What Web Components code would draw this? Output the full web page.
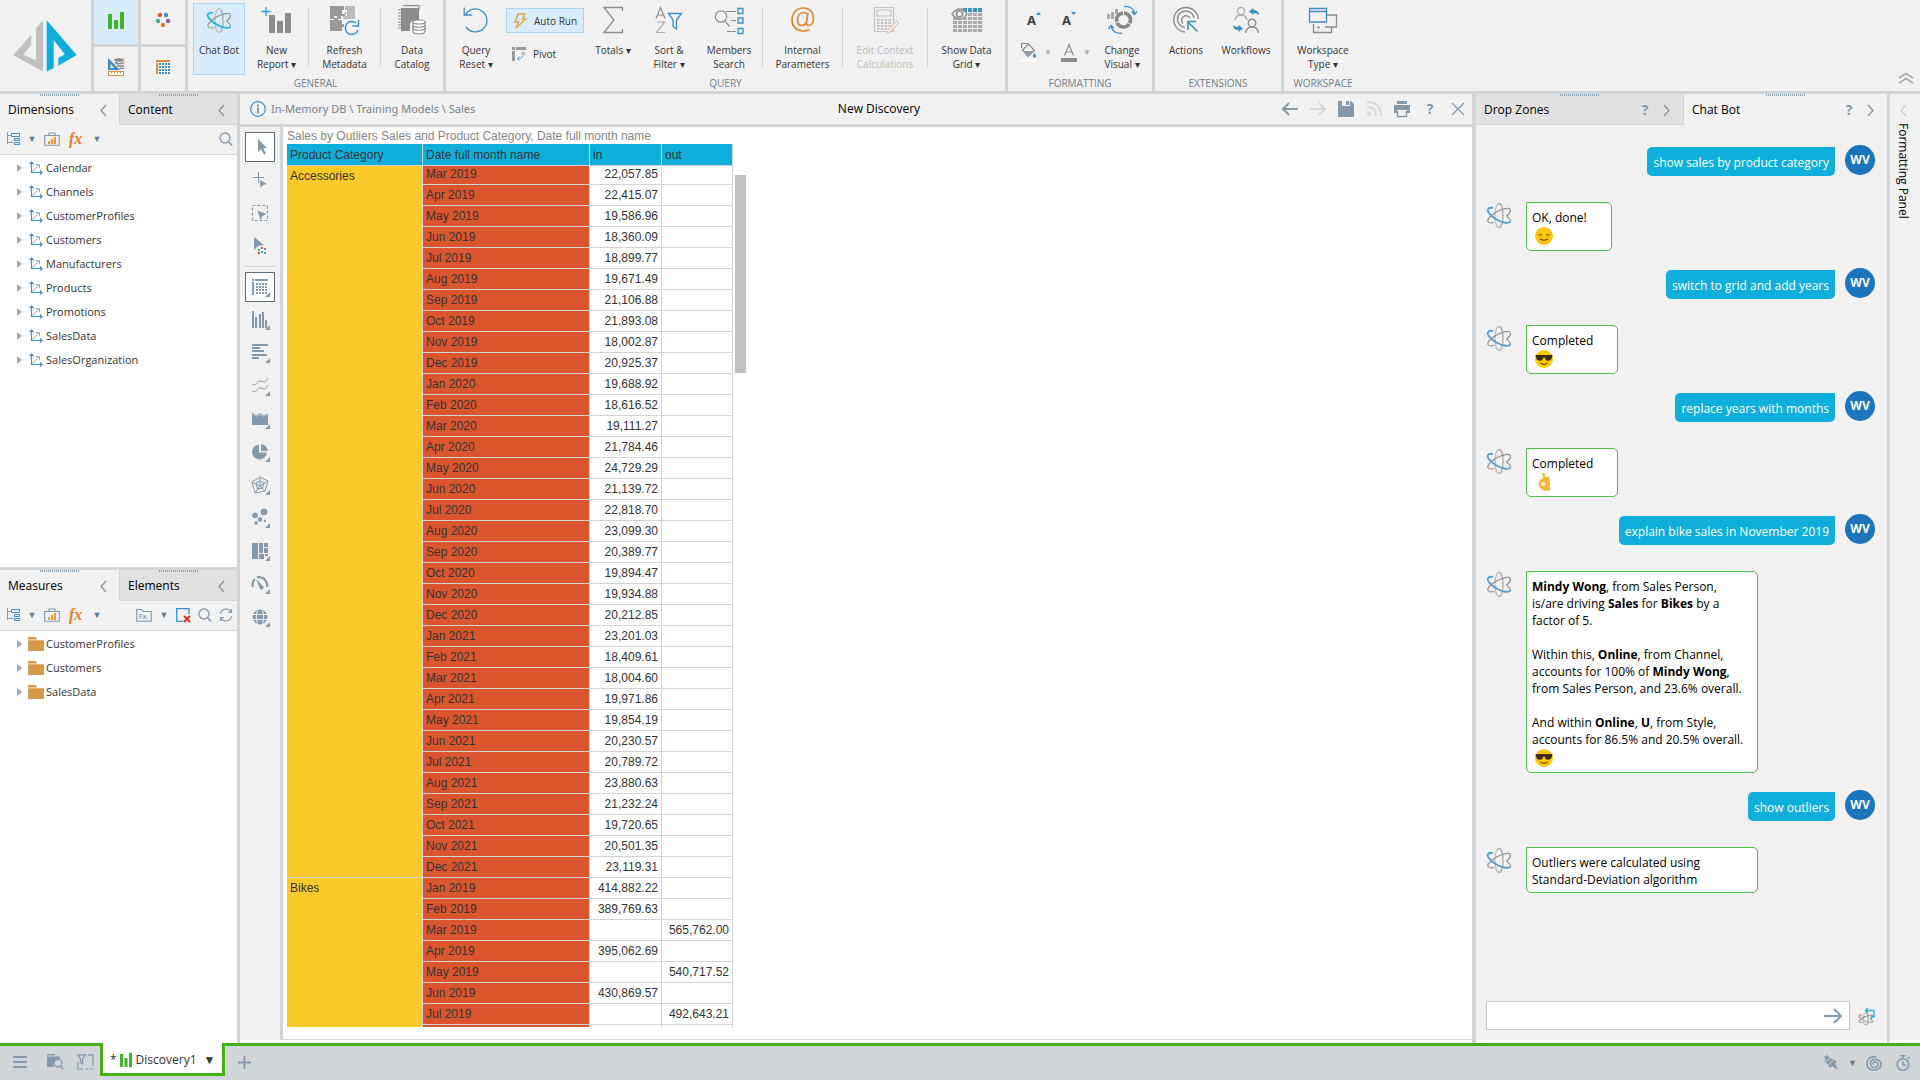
<!DOCTYPE html>
<html lang="en">
<head>
<meta charset="utf-8">
<title>New Discovery</title>
<style>
	:root {
		--panel: #f1f1f1;
		--line: #d1d5d8;
		--steel: #8499a9;
		--blue: #3d8ec4;
		--cyan: #10afdb;
		--green: #44b015;
		--hover: #d9ecfb;
		--hover-line: #a9d5f0;
	}
	html, body {
		height: 100%;
		margin: 0;
	}
	body {
		font-family: "Open Sans", "Noto Sans", sans-serif;
		font-size: 11px;
		line-height: 14px;
		color: #333;
		background: #fff;
	}
</style>
</head>
<body>
<dd-app>
	<dd-ribbon slot="ribbon"></dd-ribbon>
	<dd-panel slot="left" class="dimensions" first="Dimensions" second="Content">
		<dd-tree kind="axis" items="Calendar,Channels,CustomerProfiles,Customers,Manufacturers,Products,Promotions,SalesData,SalesOrganization"></dd-tree>
	</dd-panel>
	<dd-panel slot="left" class="measures" first="Measures" second="Elements" extra>
		<dd-tree kind="folder" items="CustomerProfiles,Customers,SalesData"></dd-tree>
	</dd-panel>
	<dd-report-header slot="header"></dd-report-header>
	<dd-toolbar slot="tools"></dd-toolbar>
	<dd-grid slot="canvas"></dd-grid>
	<dd-chat slot="chat">
		<dd-message from="user">show sales by product category</dd-message>
		<dd-message from="bot" short emoji="smile">OK, done!</dd-message>
		<dd-message from="user">switch to grid and add years</dd-message>
		<dd-message from="bot" short emoji="cool">Completed</dd-message>
		<dd-message from="user">replace years with months</dd-message>
		<dd-message from="bot" short emoji="hand">Completed</dd-message>
		<dd-message from="user">explain bike sales in November 2019</dd-message>
		<dd-message from="bot" emoji="cool"><b>Mindy Wong</b>, from Sales Person,<br>is/are driving <b>Sales</b> for <b>Bikes</b> by a<br>factor of 5.<br><br>Within this, <b>Online</b>, from Channel,<br>accounts for 100% of <b>Mindy Wong</b>,<br>from Sales Person, and 23.6% overall.<br><br>And within <b>Online</b>, <b>U</b>, from Style,<br>accounts for 86.5% and 20.5% overall.</dd-message>
		<dd-message from="user">show outliers</dd-message>
		<dd-message from="bot">Outliers were calculated using<br>Standard-Deviation algorithm</dd-message>
	</dd-chat>
	<dd-side-tab slot="side">Formatting Panel</dd-side-tab>
	<dd-status-bar slot="status"></dd-status-bar>
</dd-app>

<script>
// ICONS. name : [width, height, content]
const G = '#8c8c8c'
const S = '#8499a9'
const B = '#3d8ec4'
const corner = `<path d="M21 16v5h-5z" fill="${S}"/>`
const stroke = (color, d, w=1.2) => `<path d="${d}" fill="none" stroke="${color}" stroke-width="${w}"/>`
const fill = (color, d) => `<path d="${d}" fill="${color}"/>`
const dots = (color, x0, y0, nx, ny, w, h, sx, sy) => {
	let d = ''
	for (let j = 0; j < ny; j++) {
		for (let i = 0; i < nx; i++) {
			d += `M${x0+i*sx} ${y0+j*sy}h${w}v${h}h${-w}z`
		}
	}
	return fill(color, d)
}
const atom = (blue, w) => `
	<g fill="none" stroke-width="${w}">
		<path d="M13 1.500C15.500 1.500 17 7 17 13.500S15.500 25.500 13 25.500" stroke="#a9a9a9"/>
		<path d="M13 25.500C10.500 25.500 9 20 9 13.500S10.500 1.500 13 1.500" stroke="#bdbdbd"/>
		<path d="M2 19.500C.8 17.500 5 13 11 9.800S23 5.500 24.200 7.500 23 12 20.500 14" stroke="#909090"/>
		<path d="M2 19.500C3.200 21.500 6 21 8 20.400M20.500 14C23 16 25.500 18.500 24.200 20" stroke="#a0a0a0"/>
		<path d="M7 6C4 5.300 2.600 6 1.800 7.500.8 9.500 5 14.500 11 17.800S23 21.800 24.400 19.500" stroke="${blue}" stroke-width="${w*1.4}"/>
	</g>`

const ICONS = {
	logo: [64, 52, fill('#bfbfbf', 'M30 0.300V51.600L.3 35 18.300 14.700V25L10 34.700 23 40.300V8.300z') + fill('#10afdb', 'M33.700.3 63.700 35 45.300 45.700V38L51.700 34.300 40.700 20.300V48L33.700 51.600z')],
	bars_green: [18, 18, fill('#3fb329', 'M1 3h4v15h-4zM7 9h4v9h-4zM13 1h4v17h-4z')],
	five_dots: [16, 16, '<circle cx="5" cy="3" r="2.200" fill="#d9573a"/><circle cx="11" cy="3" r="2.200" fill="#3d8ec4"/><circle cx="3" cy="9" r="2.200" fill="#4aa99b"/><circle cx="13" cy="9" r="2.200" fill="#8d5bb0"/><circle cx="8" cy="13" r="2.200" fill="#dd7f3c"/>'],
	ruler: [18, 18, fill(B, 'M1 0 13 12H1zM3.500 6v4h4z') + '<ellipse cx="12" cy="2" rx="5" ry="1.800" fill="#8c8c8c"/>' + stroke(G, 'M8 4.500q4 2.500 9 0M10 7.500q4 1.500 7 0M12.500 10.300q3 .5 4.500-.5', 1.600) + fill('#fff', 'M1.500 13.500h15v4h-15z') + stroke('#cf9440', 'M1.500 13.500h15v4h-15zM4.500 13.500v2M7.500 13.500v2M10.500 13.500v2M13.500 13.500v2', 1.200)],
	mode_grid: [16, 16, fill('#d08f3c', 'M1 1h14v2H1zM1 4h2v11H1z') + dots(B, 4, 4, 4, 4, 2, 2, 3, 3)],
	atom: [26, 27, atom('#1eaee6', 1.200)],
	atom_chat: [26, 27, atom('#5a9cc8', 1.300)],
	new_report: [32, 28, fill(G, 'M8 9h6v18H8zM16 15h6v12h-6zM24 7h6v20h-6z') + stroke('#22a9d8', 'M5 1v9M.5 5.500h9', 1.300)],
	refresh_meta: [32, 30, fill('#999', 'M1 1h14v4h-2v4h4V7h-1v4h-4v3H8v-3H5v3H1z') + fill('#bbb', 'M16 1h10v13H14v-3h4V5h-2z') + fill('#999', 'M1 15h4v-2h4v2h4v4h2v3h-2v4H1z') + stroke(B, 'M27 18A6.500 6.500 0 1 0 29 25M29.500 15v6h-6', 1.400)],
	catalog: [30, 30, fill(G, 'M4 3h18v12h-3q-6 1-6 4v7H4z') + stroke(G, 'M22 5V.7H6M1 5h4M1 8h4M1 11h4M1 14h4M1 17h4M1 20h4M1 23h4') + `<g fill="#fff" stroke="${G}" stroke-width="1.200"><path d="M16 17v9c0 4 12 4 12 0v-9"/><ellipse cx="22" cy="17" rx="6" ry="2"/><path d="M16 20c0 3 12 3 12 0M16 23c0 3 12 3 12 0" fill="none"/></g>`],
	query_reset: [28, 28, stroke(B, 'M3.500 8.500A11.500 11.500 0 1 1 4 21M2.200 1.500v7.500h8', 1.300)],
	bolt: [14, 16, stroke('#e8a33a', 'M5 1h7L9.500 6H13L3 15 5.500 9H2z', 1.300)],
	pivot: [14, 14, fill('#999', 'M0 0h3v3H0zM4 0h10v3H4zM0 4h3v10H0z') + stroke('#79aacd', 'M5.500 11.500Q12 11.500 11.500 5.500M9.500 7.500 11.500 5l2 2.500M7.500 9.500 5.200 11.500l2.300 2', 1)],
	sigma: [22, 28, stroke(G, 'M20.500 5V1.500H2L12 14 2 26.500H20.500V23', 1.300)],
	sort: [30, 28, stroke(G, 'M2 12.500 6.500 1.500 11 12.500M3.500 9h6', 1.200) + stroke('#aaa', 'M3 16h7.500L2.500 26.500H11', 1.200) + stroke(B, 'M14.500 7.500h13l-5 6.500v9l-3.500-2.500V14z', 1.300)],
	members: [30, 28, `<circle cx="7" cy="10.500" r="5.700" fill="none" stroke="${G}" stroke-width="1.200"/>` + stroke(G, 'M11 15l4.500 5.500M12 5.500h10M17 14.500h5M13 25.500h9', 1.200) + stroke(B, 'M24 2.500h5v5h-5zM24 12h5v5h-5zM24 22.500h5v5h-5z', 1.300)],
	at: [26, 28, stroke('#de8a35', 'M17.500 8.500C17 7 15.500 6.500 13.500 6.500 9.500 6.500 7.500 10 7.500 14s2 5.500 4.500 5.500c3 0 4.500-3 5-5.500l.8-7-1.300 9.500c-.2 2 .5 3 2 3 3 0 5-3 5-7C23.500 6 19.500 2 13.500 2 6.500 2 2 7 2 14c0 6.500 4.500 11 11 11 2.500 0 4.500-.5 6.500-1.500', 1.700)],
	calc: [28, 28, `<g opacity=".45">` + stroke(G, 'M3.500 1.500h19v24h-19zM6 4h14v6H6z', 1.200) + dots(G, 6, 13, 4, 4, 2.500, 2, 3.800, 3) + fill('#fff', 'M26 14l2 2-9 10-4 2 1-4z') + stroke('#e08c50', 'M25.500 15l2 2-8.500 9-3 1 1-3z', 1.200) + '</g>'],
	data_grid: [32, 28, dots('#aaa', 2, 7, 6, 5, 4, 3, 5, 4) + dots(B, 12, 2, 4, 1, 4, 4, 5, 4) + `<path d="M1 8q8-10 15 0-7 10-15 0z" fill="#f1f1f1" stroke="${G}" stroke-width="1.300"/><circle cx="8.500" cy="8" r="3" fill="none" stroke="${G}" stroke-width="1.500"/>`],
	font_up: [16, 22, '<text x="1" y="17" font-family="Noto Sans" font-weight="700" font-size="13" fill="#444">A</text>' + fill(B, 'M10 7h5l-2.500-3z')],
	font_down: [16, 22, '<text x="1" y="17" font-family="Noto Sans" font-weight="700" font-size="13" fill="#444">A</text>' + fill(B, 'M10 4h5l-2.500 3z')],
	bucket: [18, 20, stroke(G, 'M2.500 8 8.500 2 14.500 8.500 8 14.500zM1.500 6V1.500h7', 1.200) + fill('#999', 'M3 9h11L8 14.500z') + fill(B, 'M14.500 11q3 4 0 5-3-1 0-5z') + fill('#fff', 'M0 17h16v3H0z')],
	font_color: [16, 20, stroke(G, 'M3.500 13.500 8 2.500 12.500 13.500M5 10h6', 1.200) + fill('#8c8c8c', 'M0 16h16v4H0z')],
	change: [32, 30, fill('#aaa', 'M1 9h3v5H1zM5 7h3v7H5zM9 4h3v5H9z') + '<circle cx="17.500" cy="15" r="7" fill="none" stroke="#888" stroke-width="3.600"/>' + stroke('#f1f1f1', 'M17.500 6v4M9 18l4-1.500M22 18l4 2', 1) + stroke(B, 'M18 1.500q10-.5 10.500 8M25.500 6.500 28.500 9.500 31 6.500M16 28.500Q5.500 28.500 5 20M2.500 24 5 20.500 8 23', 1.300)],
	actions: [28, 28, `<g fill="none" stroke="${G}" stroke-width="1.400"><path d="M13 26A12.300 12.300 0 1 1 26.300 13"/><path d="M13 21.500A8.300 8.300 0 1 1 22 12"/><path d="M11 17.500A4.500 4.500 0 1 1 18 12"/></g>` + stroke(B, 'M25.500 25.500 16 16M16 24v-8.500h8', 1.600)],
	workflows: [28, 28, `<g fill="none" stroke="#aaa" stroke-width="1.300"><circle cx="9" cy="5" r="3.600"/><path d="M3 14q1-5 6-5t6 5"/></g><g fill="none" stroke="${G}" stroke-width="1.400"><circle cx="20" cy="17" r="3.800"/><path d="M13.500 27q1-6 6.500-6t6.500 6"/></g>` + fill(B, 'M17 5.500 21.500 2v2Q27 4 27 9.500 25.500 7 21.500 7v2zM11 22.500 6.500 26v-2Q1 24 1 19q1.500 2 5.500 2v-2z')],
	workspace: [30, 28, stroke(G, 'M19 9h9.500v12H17M12 21.500H9M5.500 18v8.500h18v-5', 1.300) + stroke(B, 'M1.500 2.500h17v13.500h-17zM1.500 5.500h17', 1.300)],
	back: [16, 14, stroke(S, 'M1 7h15M7 1 1 7l6 6', 2)],
	forward: [16, 14, stroke('#d3d8dc', 'M0 7h15M9 1l6 6-6 6', 2)],
	save: [18, 18, fill(S, 'M1 1h4v5h8V1h1l3 3v13H1zM9 1h3v4H9z')],
	rss: [18, 18, `<circle cx="4" cy="14" r="2" fill="#d3d8dc"/>` + stroke('#d3d8dc', 'M2 7q9 0 9 9M2 2q14 0 14 14', 2)],
	print: [18, 18, fill(S, 'M4 1h10v3H4zM1 5h16v8h-3v-3H4v3H1z') + stroke(S, 'M4.500 11v5.500h9V11', 1.300)],
	close: [14, 14, stroke(S, 'M1 1l12 12M13 1 1 13', 1.300)],
	chev_left: [8, 14, stroke(G, 'M7 2 2 7.500 7 13', 1.200)],
	chev_right: [8, 14, stroke(G, 'M1 2l5 5.500L1 13', 1.200)],
	chev_light: [8, 14, stroke('#c4c9cd', 'M7 2 2 7.500 7 13', 1.200)],
	collapse: [16, 12, stroke('#a3abb2', 'M1 6l7-4.500L15 6M1 11l7-4.500 7 4.500', 1.500)],
	tree: [14, 14, stroke(S, 'M1.500 0v12M2 3.500h3M2 10.500h5', 1) + stroke(B, 'M5.500 1.500h8v3h-8zM8.500 6.500h5v2h-5zM8.500 10.500h5v2h-5z', 1)],
	case: [16, 14, stroke(S, 'M.7 3.500h14.600v9.800H.7zM5 3.500V1h6v2.500', 1.100) + fill('#f09a2e', 'M4 9h2v3H4zM7 7h2v5H7zM10 5h2v7h-2z')],
	fx: [18, 20, '<text x="2" y="15" font-family="Liberation Serif" font-style="italic" font-weight="700" font-size="16" fill="#f07a28">fx</text>'],
	search: [14, 14, `<circle cx="6" cy="6" r="5" fill="none" stroke="${S}" stroke-width="1.300"/>` + stroke(S, 'M10 10l3 3.500', 1.600)],
	fx_folder: [16, 14, stroke(S, 'M.7 1.500h5l1 2h8.600v9.800H.7z', 1.100) + `<text x="3" y="11" font-family="Open Sans" font-weight="600" font-size="7" fill="${S}">Fx</text>`],
	clear: [15, 14, stroke(B, 'M13 6V.7H.7v12.600H7', 1.300) + stroke('#e32222', 'M8 8l6 6M14 8l-6 6', 1.900)],
	sync: [14, 14, stroke(S, 'M1.500 6A5.600 5.600 0 0 1 12 4M12.500 8A5.600 5.600 0 0 1 2 10M12.500 1v3.500H9M1.500 13V9.500H5', 1.200)],
	axis: [14, 14, stroke(B, 'M2.500 1v10.500h11M.5 3 2.500 1l2 2M11 9.500l2 2-2 2', 1.200) + stroke('#9aa7b0', 'M3.500 10.500 10.500 3.500M6.500 3.500h4v4', 1)],
	folder: [16, 14, fill('#d6994a', 'M0 0h7l2 1.500v1H0zM0 3.300h16V14H0z')],
	info: [16, 16, `<circle cx="8" cy="8" r="7.300" fill="none" stroke="${B}" stroke-width="1.200"/>` + fill(S, 'M7 3.500h2v2H7zM7 6.500h2v6H7z')],
	cursor: [22, 22, fill(S, 'M9 3l9 9h-4l3 5.500-2 1-3-5.500-3 3z')],
	add_cursor: [22, 22, stroke(S, 'M9.500 3v11M4 8.500h11', 1) + fill(S, 'M11 11l7 4-4 1-2.500 3z')],
	lasso: [22, 22, `<path d="M3.500 3.500h15v15h-15z" fill="none" stroke="${S}" stroke-width="1.200" stroke-dasharray="3 2"/>` + fill(S, 'M8.500 8.500l9 3.500-4 2-2 4z')],
	cursor_dots: [22, 22, fill(S, 'M5 2l10 8-6 1-4 4z') + '<path d="M9 14h2v2H9zM12 16h2v2h-2z" fill="#4aa99b"/><path d="M12 12h2v2h-2zM9 17h2v2H9z" fill="#d9573a"/><path d="M15 13h2v2h-2zM15 17h2v2h-2z" fill="#5a9cc8"/>'],
	t_grid: [22, 22, fill(S, 'M6 3h13v2H6zM3 6h2v13H3zM3 3h2v2H3z') + dots(S, 7, 7, 4, 4, 2, 2, 3, 3) + corner],
	t_bars: [22, 22, fill(S, 'M3 2h2v17H3zM6 8h2v11H6zM10 5h2v14h-2zM13 3h2v16h-2zM16 11h2v8h-2z') + corner],
	t_rows: [22, 22, fill(S, 'M3 2h16v2H3zM3 5h8v2H3zM3 8h12v2H3zM3 12h15v2H3zM3 15h7v2H3z') + corner],
	t_lines: [22, 22, stroke(S, 'M3 9c5 3 5-4 9-3s3 3 7-3M3 16c5 3 5-4 9-3s3 3 7-3', 1) + corner],
	t_area: [22, 22, fill('#a9b8c4', 'M3 4l4 3 4-2 4 2 4-2v7H3z') + fill(S, 'M3 6l4 3 4-2 4 2 4-2v10H3z') + corner],
	t_pie: [22, 22, fill(S, 'M10 3.500a7.500 7.500 0 1 0 8 8h-8z') + fill(S, 'M12 3v7h7a7.500 7.500 0 0 0-7-7z') + corner],
	t_radar: [22, 22, stroke(S, 'M11 3 19 7 16 17 6 19 3 8zM11 7l4 2-1.500 5-5 1L7 9zM11 3v9M19 7l-8 5M16 17l-5-5M6 19l5-7M3 8l8 4', 1) + corner],
	t_scatter: [22, 22, `<g fill="${S}"><circle cx="15" cy="5" r="3.300"/><circle cx="6" cy="8.500" r="2.800"/><circle cx="11" cy="12.500" r="2.200"/><circle cx="7" cy="16" r="1.800"/><circle cx="16" cy="14" r="1.200"/></g>` + corner],
	t_tree: [22, 22, fill(S, 'M3 3h6v16H3zM10 3h4v10h-4zM15 3h4v4h-4zM15 8h4v5h-4zM10 14h5v5h-5zM16 14h3v2h-3z') + corner],
	t_gauge: [22, 22, stroke(S, 'M4 14A7.500 7.500 0 0 1 6 6M8 4.500A8 8 0 0 1 18 14', 2.200) + fill(S, 'M7 6l7 7a2 2 0 0 1-3 3z') + corner],
	t_globe: [22, 22, `<circle cx="11" cy="11" r="7.500" fill="${S}"/>` + stroke('#f1f1f1', 'M3 8.500h16M3 13.500h16M8.500 3q-2.500 8 0 16M13.500 3q2.500 8 0 16', 1) + corner],
	menu: [14, 12, stroke(S, 'M0 1h14M0 6h14M0 11h14', 2)],
	find_page: [17, 16, fill(S, 'M0 0h8v1.500H0zM0 2.500h13V6Q6 5 6.500 13H0z') + `<circle cx="11" cy="9" r="3.800" fill="none" stroke="${S}" stroke-width="1.300"/>` + stroke(S, 'M13.500 11.500l2.500 4', 1.400)],
	filter_page: [17, 16, stroke(S, 'M.8.8h7.500L5.500 5v5L3.500 8.500V5zM11 .8h5v11M.8 8v7H6M8.500 15h3M13 15h3', 1.200)],
	bars_tab: [12, 14, fill('#3fb329', 'M0 1h3v13H0zM4.500 5h3v9h-3zM9 0h3v14H9z')],
	plus: [13, 13, stroke(S, 'M6.500 0v13M0 6.500h13', 2)],
	pin: [16, 16, fill(S, 'M4 0l3 3 5 2 2 2-2 1 3 7-6-4-2 2-2-3-4-4 2-1-2-3z') + stroke('#d1d6d9', 'M2 8l6-6M5 10l6-5', 1)],
	spiral: [16, 16, stroke(S, 'M10 2Q1 1 1 8.500 1 15 8 15t7-6.500Q14 4.500 9 4.500T4.500 9q.5 3.500 4 3.500T12 9Q11.500 7 9 7T7.500 9.500', 1.600)],
	timer: [16, 16, `<circle cx="8" cy="9.500" r="5.800" fill="none" stroke="${S}" stroke-width="1.600"/>` + stroke(S, 'M8 6v4h3M5.500.8h5M8 1v2M13 2l1.500 1.500', 1.400)],
	send: [18, 16, stroke(S, 'M0 8h16M10 1l7 7-7 7', 2)],
	undo_bot: [18, 18, `<g transform="translate(1 5) scale(.6 .5)">${atom('#b5b5b5', 2.200)}</g>` + stroke('#2eaedb', 'M11 1 8.500 3.500 11 6M9 3.500h8V10h-3.500', 1.400)],
	smile: [18, 18, '<circle cx="9" cy="9" r="9" fill="#fcc80d"/>' + stroke('#6b4a0c', 'M3.500 7.500q1.500 1 3 0M11.500 7.500q1.500 1 3 0M5 12q4 2.500 8 0', 1.200)],
	cool: [18, 18, '<circle cx="9" cy="9" r="9" fill="#fcc80d"/>' + fill('#3b2f1e', 'M.5 5h17l-1 4q-2 2.500-5 1.500Q10 9.500 9.500 7.500h-1Q8 9.500 6.500 10.500 3 11.500 1.500 9z') + stroke('#6b4a0c', 'M5.500 13.300q3.500 2 7 0', 1.200)],
	hand: [18, 18, fill('#f6b83c', 'M7 .5q2-1 3 .5v3h4l1 5v8q-1 1-3 1-5 0-7-3-2-3-1-6 1-3 4-4z') + '<circle cx="8" cy="11" r="2" fill="#fff3d6"/>']
}

class DDElement extends HTMLElement {
	constructor() {
		super()
		this.attachShadow({ mode: 'open' })
	}
	connectedCallback() {
		this.shadowRoot.innerHTML = this.render()
	}
	render() {
		return '<slot></slot>'
	}
}

class DDIcon extends DDElement {
	render() {
		const [w, h, content] = ICONS[this.getAttribute('name')]
		return `
		<style>
			:host { display: inline-flex; flex: none; }
			svg { display: block; overflow: visible; }
		</style>
		<svg width="${w}" height="${h}" viewBox="0 0 ${w} ${h}" aria-hidden="true">${content}</svg>`
	}
}
customElements.define('dd-icon', DDIcon)

const icon = (name) => `<dd-icon name="${name}"></dd-icon>`

// shared rules, repeated in each shadow root that holds buttons
const BUTTON_CSS = `
	button {
		display: flex;
		align-items: center;
		justify-content: center;
		box-sizing: border-box;
		margin: 0;
		padding: 0;
		border: 0;
		background: none;
		font: inherit;
		color: inherit;
		cursor: pointer;
	}
`

class DDApp extends DDElement {
	render() {
		return `
		<style>
			:host {
				display: grid;
				grid-template-columns: 237px minmax(0, 1fr) 411px 30px;
				grid-template-rows: auto minmax(0, 1fr) auto;
				column-gap: 3px;
				height: 100vh;
				background: var(--line);
			}
			.ribbon, .status {
				grid-column: 1 / -1;
			}
			.left {
				display: grid;
				grid-template-rows: minmax(0, 473fr) minmax(0, 470fr);
				gap: 3px;
			}
			.center {
				display: grid;
				grid-template-columns: 40px minmax(0, 1fr);
				grid-template-rows: 30px minmax(0, 1fr);
				gap: 3px;
				margin-right: 1px;
			}
			.header {
				grid-column: 1 / -1;
			}
			.body {
				border-bottom: 3px solid #fff;
				min-height: 0;
			}
			.body > div, .chat, .side {
				background: var(--panel);
			}
			.center > .canvas {
				background: #fff;
			}
			.chat {
				display: grid;
			}
		</style>
		<header class="ribbon"><slot name="ribbon"></slot></header>
		<aside class="left body"><slot name="left"></slot></aside>
		<main class="center body">
			<div class="header"><slot name="header"></slot></div>
			<div><slot name="tools"></slot></div>
			<div class="canvas"><slot name="canvas"></slot></div>
		</main>
		<aside class="chat body"><slot name="chat"></slot></aside>
		<aside class="side body"><slot name="side"></slot></aside>
		<footer class="status"><slot name="status"></slot></footer>
		`
	}
}

// RIBBON
class DDRibbonButton extends DDElement {
	render() {
		return `
		<style>
			:host { display: flex; flex: none; color: #333; }
			${BUTTON_CSS}
			button {
				flex: 1;
				flex-direction: column;
				justify-content: flex-start;
				height: 72px;
				border: 1px solid transparent;
				text-align: center;
			}
			:host([active]) button {
				background: var(--hover);
				border-color: var(--hover-line);
			}
			:host([off]) button { color: #bbb; }
			.pic {
				display: flex;
				align-items: center;
				height: 32px;
				margin-bottom: 7px;
			}
		</style>
		<button ${this.hasAttribute('off') ? 'disabled' : ''}><span class="pic">${icon(this.getAttribute('icon'))}</span><span><slot></slot></span></button>
		`
	}
}
customElements.define('dd-ribbon-button', DDRibbonButton)

class DDRibbon extends DDElement {
	render() {
		return `
		<style>
			:host {
				display: flex;
				height: 91px;
				background: var(--panel);
				border-bottom: 3px solid var(--line);
				font-size: 10px;
			}
			${BUTTON_CSS}
			.logo {
				display: flex;
				align-items: center;
				width: 78px;
				padding-left: 13px;
				border-right: 3px solid var(--line);
			}
			.modes {
				display: grid;
				grid-template-columns: 44px 44px;
				grid-template-rows: 44px 44px;
				gap: 3px;
				background: var(--line);
				padding-right: 3px;
			}
			.modes button { background: var(--panel); }
			.modes button.on { background: var(--hover); }
			.modes button:nth-child(-n+2) { padding-bottom: 4px; }
			.modes button:nth-child(n+3) { padding-bottom: 4px; }
			section {
				display: flex;
				flex-direction: column;
				justify-content: space-between;
				border-right: 3px solid var(--line);
			}
			section:last-of-type { border: 0; }
			h2 {
				margin: 0;
				padding-bottom: 1px;
				font-size: 10px;
				font-weight: 400;
				text-align: center;
				color: #6e7d88;
			}
			.items {
				display: flex;
				align-items: flex-start;
				padding-top: 3px;
			}
			.general { width: 250px; padding-left: 5px; }
			.extensions { padding-right: 6px; }
			.items i {
				width: 1px;
				height: 59px;
				margin-top: 5px;
				background: var(--line);
			}
			.stack {
				display: flex;
				flex-direction: column;
				gap: 8px;
				width: 78px;
				padding-top: 5px;
			}
			.stack button {
				justify-content: flex-start;
				height: 25px;
				gap: 7px;
				padding-left: 6px;
				border: 1px solid transparent;
			}
			.stack button + button { padding-left: 5px; }
			.stack button.on {
				background: var(--hover);
				border-color: var(--hover-line);
			}
			.fonts {
				display: grid;
				grid-template-columns: 41px 31px;
				grid-template-rows: 32px 34px;
				padding-left: 12px;
			}
			.fonts button { justify-content: flex-start; gap: 6px; }
			.fonts button:first-child { padding-left: 6px; }
			.fonts small { font-size: 8px; color: #aaa; }
			.collapse {
				margin-left: auto;
				align-self: flex-end;
				padding: 0 6px 7px 0;
			}
		</style>
		<div class="logo">${icon('logo')}</div>
		<div class="modes">
			<button class="on" aria-label="Discover">${icon('bars_green')}</button>
			<button aria-label="Present">${icon('five_dots')}</button>
			<button aria-label="Model">${icon('ruler')}</button>
			<button aria-label="Tabulate">${icon('mode_grid')}</button>
		</div>
		<section>
			<div class="items general">
				<dd-ribbon-button style="width:52px" icon="atom" active>Chat Bot</dd-ribbon-button>
				<dd-ribbon-button style="width:63px" icon="new_report">New<br>Report ▾</dd-ribbon-button>
				<i></i>
				<dd-ribbon-button style="width:71px" icon="refresh_meta">Refresh<br>Metadata</dd-ribbon-button>
				<i></i>
				<dd-ribbon-button style="width:62px" icon="catalog">Data<br>Catalog</dd-ribbon-button>
			</div>
			<h2>GENERAL</h2>
		</section>
		<section>
			<div class="items">
				<dd-ribbon-button style="width:60px" icon="query_reset">Query<br>Reset ▾</dd-ribbon-button>
				<div class="stack">
					<button class="on">${icon('bolt')}Auto Run</button>
					<button>${icon('pivot')}Pivot</button>
				</div>
				<dd-ribbon-button style="width:58px" icon="sigma">Totals ▾</dd-ribbon-button>
				<dd-ribbon-button style="width:54px" icon="sort">Sort &amp;<br>Filter ▾</dd-ribbon-button>
				<dd-ribbon-button style="width:66px" icon="members">Members<br>Search</dd-ribbon-button>
				<i></i>
				<dd-ribbon-button style="width:79px" icon="at">Internal<br>Parameters</dd-ribbon-button>
				<i></i>
				<dd-ribbon-button style="width:84px" icon="calc" off>Edit Context<br>Calculations</dd-ribbon-button>
				<i></i>
				<dd-ribbon-button style="width:77px" icon="data_grid">Show Data<br>Grid ▾</dd-ribbon-button>
			</div>
			<h2>QUERY</h2>
		</section>
		<section>
			<div class="items">
				<div class="fonts">
					<button aria-label="Increase font">${icon('font_up')}</button>
					<button aria-label="Decrease font">${icon('font_down')}</button>
					<button aria-label="Fill color">${icon('bucket')}<small>▼</small></button>
					<button aria-label="Font color">${icon('font_color')}<small>▼</small></button>
				</div>
				<dd-ribbon-button style="width:60px" icon="change">Change<br>Visual ▾</dd-ribbon-button>
			</div>
			<h2>FORMATTING</h2>
		</section>
		<section>
			<div class="items extensions">
				<dd-ribbon-button style="width:62px" icon="actions">Actions</dd-ribbon-button>
				<dd-ribbon-button style="width:58px" icon="workflows">Workflows</dd-ribbon-button>
			</div>
			<h2>EXTENSIONS</h2>
		</section>
		<section>
			<div class="items">
				<dd-ribbon-button style="width:78px" icon="workspace">Workspace<br>Type ▾</dd-ribbon-button>
			</div>
			<h2>WORKSPACE</h2>
		</section>
		<button class="collapse" aria-label="Collapse ribbon">${icon('collapse')}</button>
		`
	}
}
customElements.define('dd-ribbon', DDRibbon)

// TABS
class DDTab extends DDElement {
	render() {
		const right = this.hasAttribute('right')
		return `
		<style>
			:host {
				display: flex;
				align-items: center;
				position: relative;
				box-sizing: border-box;
				height: 31px;
				padding: 1px 8px 0;
				font-size: 12px;
				color: #000;
				background: var(--panel);
			}
			:host([idle]) {
				background: #e1e1e1;
				border: solid var(--line);
				border-width: 0 0 1px 1px;
			}
			:host([idle][right]) {
				border-width: 0 1px 1px 0;
			}
			/* drag grip, lies on the top edge */
			:host::before {
				content: "";
				position: absolute;
				top: 0;
				left: calc(50% - 20px);
				width: 40px;
				height: 2px;
				background: repeating-linear-gradient(90deg, #8fa3b3 0 1px, transparent 1px 2px);
			}
			${BUTTON_CSS}
			button { width: 16px; height: 20px; }
			.name { flex: 1; text-align: left; }
			.name button { width: auto; }
			:host(:not([right])) .name { font-weight: 500; }
			.help { width: 28px; font-size: 14px; font-weight: 700; color: var(--steel); }
		</style>
		<span class="name"><button><slot></slot></button></span>
		${right ? '<button class="help">?</button>' : ''}
		<button aria-label="Collapse">${icon(right ? 'chev_right' : 'chev_left')}</button>
		`
	}
}
customElements.define('dd-tab', DDTab)

class DDPanel extends DDElement {
	render() {
		const extra = this.hasAttribute('extra')
		return `
		<style>
			:host {
				display: flex;
				flex-direction: column;
				min-height: 0;
				background: #fff;
			}
			${BUTTON_CSS}
			.tabs {
				display: grid;
				grid-template-columns: 119px 1fr;
			}
			.tools {
				display: flex;
				align-items: center;
				box-sizing: border-box;
				height: 30px;
				padding: 0 4px 2px 6px;
				gap: 7px;
				background: var(--panel);
				border-bottom: 1px solid var(--line);
			}
			.tools small { font-size: 9px; color: #66798a; width: 10px; text-align: center; }
			.gap { flex: 1; }
		</style>
		<div class="tabs">
			<dd-tab>${this.getAttribute('first')}</dd-tab>
			<dd-tab idle>${this.getAttribute('second')}</dd-tab>
		</div>
		<div class="tools">
			<button aria-label="Tree view">${icon('tree')}</button><small>▼</small>
			<button aria-label="Measures">${icon('case')}</button>
			<button aria-label="Formula">${icon('fx')}</button><small>▼</small>
			<span class="gap"></span>
			${extra ? `
			<button aria-label="Formula folder">${icon('fx_folder')}</button><small>▼</small>
			<button aria-label="Clear">${icon('clear')}</button>` : ''}
			<button aria-label="Search">${icon('search')}</button>
			${extra ? `<button aria-label="Refresh">${icon('sync')}</button>` : ''}
		</div>
		<slot></slot>
		`
	}
}
customElements.define('dd-panel', DDPanel)

class DDTree extends DDElement {
	render() {
		const kind = this.getAttribute('kind')
		const rows = this.getAttribute('items').split(',').map(name => `
			<li><span class="arrow"></span><span class="pic">${icon(kind)}</span>${name}</li>`).join('')
		return `
		<style>
			:host { display: block; overflow: hidden; }
			ul { list-style: none; margin: 0; padding: 1px 0 0 17px; }
			li { display: flex; align-items: center; height: 24px; }
			.arrow {
				border: solid transparent;
				border-width: 4px 0 4px 5px;
				border-left-color: #a8a8a8;
			}
			.pic { width: 17px; margin: 0 2px 0 5px; display: flex; justify-content: center; }
		</style>
		<ul>${rows}</ul>
		`
	}
}
customElements.define('dd-tree', DDTree)

// REPORT
class DDReportHeader extends DDElement {
	render() {
		return `
		<style>
			:host {
				display: grid;
				grid-template-columns: minmax(0, 1fr) auto minmax(0, 1fr);
				align-items: center;
				height: 30px;
				padding: 0 0 0 46px;
				font-size: 12px;
				color: #000;
			}
			${BUTTON_CSS}
			.path {
				display: flex;
				align-items: center;
				gap: 5px;
				margin-left: -36px;
				font-family: "Noto Sans", sans-serif;
				font-size: 11px;
				color: #75828c;
			}
			h1 { margin: 0; font-size: 12px; font-weight: 500; }
			nav { display: flex; justify-content: flex-end; }
			nav button { width: 28px; height: 24px; }
			.help { font-size: 14px; font-weight: 700; color: var(--steel); }
		</style>
		<span class="path">${icon('info')}<span>In-Memory DB \\ Training Models \\ Sales</span></span>
		<h1>New Discovery</h1>
		<nav>
			<button aria-label="Undo">${icon('back')}</button>
			<button aria-label="Redo">${icon('forward')}</button>
			<button aria-label="Save">${icon('save')}</button>
			<button aria-label="Subscribe">${icon('rss')}</button>
			<button aria-label="Print">${icon('print')}</button>
			<button class="help">?</button>
			<button aria-label="Close">${icon('close')}</button>
		</nav>
		`
	}
}
customElements.define('dd-report-header', DDReportHeader)

class DDToolbar extends DDElement {
	render() {
		const button = (name, on) => `<button class="${on ? 'on' : ''}" aria-label="${name}">${icon(name)}</button>`
		return `
		<style>
			:host {
				display: flex;
				flex-direction: column;
				gap: 3px;
				padding: 5px;
			}
			${BUTTON_CSS}
			button { width: 30px; height: 30px; border: 1px solid transparent; }
			.on { background: #fff; border-color: #5d6973; }
			hr { width: 30px; height: 1px; border: 0; margin: 2px 0; background: #c9ced2; }
		</style>
		${button('cursor', true)}${['add_cursor', 'lasso', 'cursor_dots'].map(n => button(n)).join('')}
		<hr>
		${button('t_grid', true)}${['bars', 'rows', 'lines', 'area', 'pie', 'radar', 'scatter', 'tree', 'gauge', 'globe'].map(n => button('t_' + n)).join('')}
		`
	}
}
customElements.define('dd-toolbar', DDToolbar)

const MONTHS = ['Jan', 'Feb', 'Mar', 'Apr', 'May', 'Jun', 'Jul', 'Aug', 'Sep', 'Oct', 'Nov', 'Dec']
const ACCESSORIES = [
	'22,057.85', '22,415.07', '19,586.96', '18,360.09', '18,899.77', '19,671.49', '21,106.88', '21,893.08', '18,002.87', '20,925.37',
	'19,688.92', '18,616.52', '19,111.27', '21,784.46', '24,729.29', '21,139.72', '22,818.70', '23,099.30', '20,389.77', '19,894.47', '19,934.88', '20,212.85',
	'23,201.03', '18,409.61', '18,004.60', '19,971.86', '19,854.19', '20,230.57', '20,789.72', '23,880.63', '21,232.24', '19,720.65', '20,501.35', '23,119.31'
]
const BIKES = [
	['414,882.22', ''], ['389,769.63', ''], ['', '565,762.00'], ['395,062.69', ''],
	['', '540,717.52'], ['430,869.57', ''], ['', '492,643.21'], ['', '']
]

class DDGrid extends DDElement {
	render() {
		const month = (n) => `${MONTHS[n % 12]} ${2019 + Math.floor(n / 12)}`
		const row = (first, label, a, b) => `<tr>${first}<td class="month">${label}</td><td>${a}</td><td>${b}</td></tr>`
		const rows = ACCESSORIES.map((value, i) => row(
			i===0 ? `<th scope="rowgroup" rowspan="${ACCESSORIES.length}">Accessories</th>` : '', month(i + 2), value, ''
		)).concat(BIKES.map(([a, b], i) => row(
			i===0 ? `<th scope="rowgroup" rowspan="${BIKES.length}">Bikes</th>` : '', i < 7 ? month(i) : '', a, b
		)))
		return `
		<style>
			:host {
				display: flex;
				flex-direction: column;
				box-sizing: border-box;
				height: 100%;
				padding: 1px 4px 12px;
				font-family: "Liberation Sans", Arial, sans-serif;
				font-size: 12px;
				line-height: 16px;
				border-bottom: 1px solid var(--line);
			}
			h2 { margin: 0; font-size: 12px; font-weight: 400; color: #868686; }
			.scroll {
				display: flex;
				align-items: flex-start;
				min-height: 0;
				flex: 1;
				overflow: hidden;
				gap: 2px;
			}
			table {
				width: 446px;
				table-layout: fixed;
				border-spacing: 0;
				color: #333;
			}
			th, td {
				box-sizing: border-box;
				height: 21px;
				padding: 0 3px;
				border: solid #d3d3d3;
				border-width: 0 1px 1px 0;
				font-weight: 400;
				text-align: right;
				white-space: nowrap;
			}
			thead th { height: 22px; background: var(--cyan); text-align: left; }
			tbody th { background: #f9ca29; text-align: left; vertical-align: top; padding-top: 2px; }
			.month { background: #db562e; text-align: left; }
			/* the top row is partly scrolled under the header */
			tbody tr:first-child td { height: 19px; padding-bottom: 2px; }
			.bar { width: 11px; height: 198px; margin-top: 31px; background: #c1c1c1; }
		</style>
		<h2>Sales by Outliers Sales and Product Category, Date full month name</h2>
		<div class="scroll">
			<table>
				<colgroup><col style="width:136px"><col style="width:167px"><col style="width:72px"><col style="width:71px"></colgroup>
				<thead><tr><th>Product Category</th><th>Date full month name</th><th>in</th><th>out</th></tr></thead>
				<tbody>${rows.join('')}</tbody>
			</table>
			<div class="bar"></div>
		</div>
		`
	}
}
customElements.define('dd-grid', DDGrid)

// CHAT
class DDMessage extends DDElement {
	render() {
		const emoji = this.getAttribute('emoji')
		const bot = this.getAttribute('from')==='bot'
		return `
		<style>
			:host {
				display: flex;
				align-items: flex-start;
				font-size: 12px;
				line-height: 17px;
				color: #000;
			}
			:host([from=user]) {
				justify-content: flex-end;
				gap: 10px;
				padding: 0 12px 0 0;
				margin-bottom: 26px;
			}
			:host([from=bot]) {
				gap: 14px;
				padding-left: 10px;
				margin-bottom: 17px;
			}
			.bubble { box-sizing: border-box; }
			:host([from=user]) .bubble {
				margin-top: 2px;
				padding: 7px 6px 5px;
				border-radius: 5px 0 5px 5px;
				background: var(--cyan);
				color: #fff;
			}
			:host([from=bot]) .bubble {
				width: 232px;
				padding: 6px 5px 4px;
				border: 1px solid #4dc247;
				border-radius: 0 5px 5px 5px;
				background: #fff;
			}
			:host([short]) .bubble { width: auto; padding-right: 24px; }
			.avatar {
				width: 30px;
				height: 30px;
				margin-bottom: -1px;
				border-radius: 50%;
				background: #1c75bc;
				color: #fff;
				font-weight: 700;
				line-height: 30px;
				text-align: center;
			}
			.emoji { display: flex; align-items: center; height: 20px; padding-left: 3px; }
		</style>
		${bot ? icon('atom_chat') : ''}
		<div class="bubble"><slot></slot>${emoji ? `<div class="emoji">${icon(emoji)}</div>` : ''}</div>
		${bot ? '' : '<div class="avatar">WV</div>'}
		`
	}
}
customElements.define('dd-message', DDMessage)

class DDChat extends DDElement {
	render() {
		return `
		<style>
			:host {
				display: flex;
				flex-direction: column;
				min-height: 0;
			}
			${BUTTON_CSS}
			.tabs {
				display: grid;
				grid-template-columns: 208px 1fr;
			}
			.list { flex: 1; min-height: 0; padding-top: 20px; overflow: hidden; }
			form {
				display: flex;
				align-items: center;
				gap: 7px;
				margin: 0;
				padding: 0 12px 10px 10px;
			}
			.box {
				display: flex;
				flex: 1;
				height: 27px;
				background: #fff;
				border: 1px solid #c9c9c9;
			}
			input { flex: 1; min-width: 0; border: 0; padding: 0 6px; background: none; font: inherit; outline: 0; }
			.box button { width: 32px; }
		</style>
		<div class="tabs">
			<dd-tab right idle>Drop Zones</dd-tab>
			<dd-tab right>Chat Bot</dd-tab>
		</div>
		<div class="list"><slot></slot></div>
		<form onsubmit="return false">
			<div class="box">
				<input type="text" aria-label="Message">
				<button aria-label="Send">${icon('send')}</button>
			</div>
			<button type="reset" aria-label="Restart chat">${icon('undo_bot')}</button>
		</form>
		`
	}
}
customElements.define('dd-chat', DDChat)

class DDSideTab extends DDElement {
	render() {
		return `
		<style>
			:host {
				display: flex;
				flex-direction: column;
				align-items: center;
				gap: 6px;
				padding: 9px 4px 0 0;
				color: #000;
				font-size: 12px;
			}
			${BUTTON_CSS}
			.name { writing-mode: vertical-rl; }
		</style>
		<button aria-label="Expand">${icon('chev_light')}</button>
		<button class="name"><slot></slot></button>
		`
	}
}
customElements.define('dd-side-tab', DDSideTab)

class DDStatusBar extends DDElement {
	render() {
		return `
		<style>
			:host {
				display: flex;
				align-items: center;
				height: 34px;
				padding: 0 9px 0 13px;
				border-top: 3px solid var(--green);
				background: #d1d6d9;
			}
			${BUTTON_CSS}
			.left { display: flex; gap: 16px; width: 87px; padding-bottom: 2px; }
			.left button:nth-child(2) { margin-left: 4px; }
			.left button:nth-child(3) { margin-left: -3px; }
			.tab {
				align-self: flex-start;
				height: 33px;
				margin-top: -3px;
				padding: 4px 7px 0;
				gap: 3px;
				border: solid var(--green);
				border-width: 0 3px 3px;
				background: #fff;
				font-size: 12px;
			}
			.tab span { margin: 0 4px 0 1px; }
			.tab small { font-size: 12px; }
			.add { margin: 0 0 2px 13px; }
			.right { display: flex; align-items: center; gap: 13px; margin-left: auto; }
			.right small { font-size: 9px; color: #66798a; margin: 0 -4px; }
		</style>
		<div class="left">
			<button aria-label="Menu">${icon('menu')}</button>
			<button aria-label="Find">${icon('find_page')}</button>
			<button aria-label="Filter">${icon('filter_page')}</button>
		</div>
		<button class="tab">*${icon('bars_tab')}<span>Discovery1</span><small>▼</small></button>
		<button class="add" aria-label="Add">${icon('plus')}</button>
		<div class="right">
			<button aria-label="Pin">${icon('pin')}</button><small>▼</small>
			<button aria-label="Activity">${icon('spiral')}</button>
			<button aria-label="Timer">${icon('timer')}</button>
		</div>
		`
	}
}
customElements.define('dd-status-bar', DDStatusBar)
customElements.define('dd-app', DDApp)
</script>
</body>
</html>
